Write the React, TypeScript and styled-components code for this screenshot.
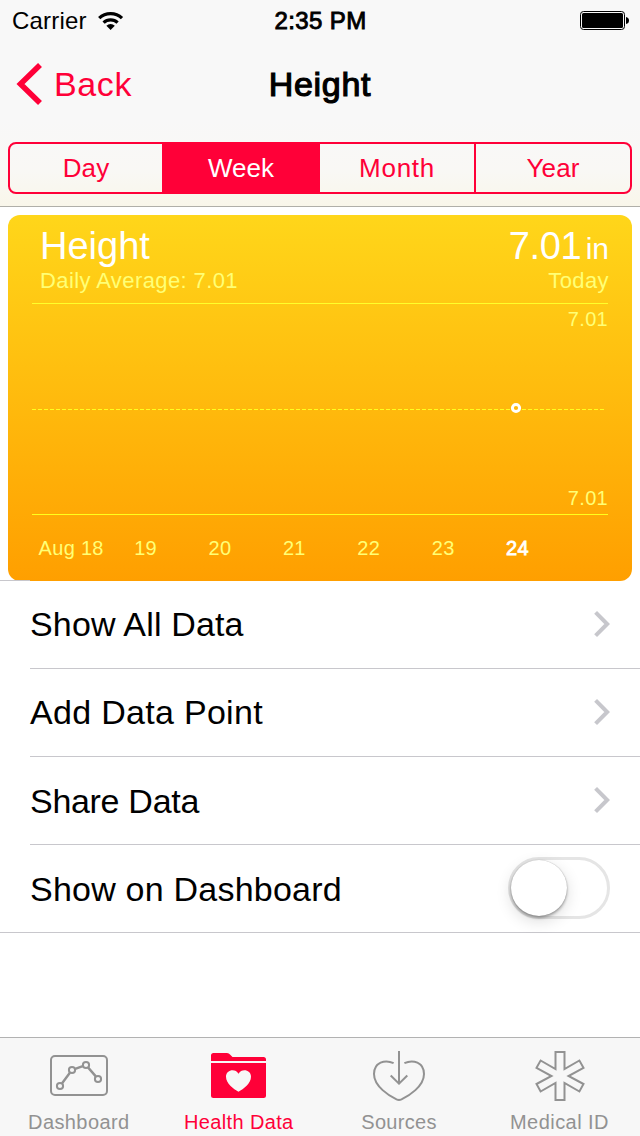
import React from 'react';
import styled, { createGlobalStyle } from 'styled-components';

const red = '#ff0038';
const grey = '#929292';
const hairline = '#c8c7cc';
const paleYellow = '#ffff76';

const GlobalStyle = createGlobalStyle`
  *, *::before, *::after { box-sizing: border-box; }
  body {
    margin: 0;
    background: #fff;
    font-family: 'Liberation Sans', Arial, sans-serif;
    color: #000;
  }
`;

const Screen = styled.div`
  width: 640px;
  height: 1136px;
  display: flex;
  flex-direction: column;
  overflow: hidden;
  background: #fff;
`;

const Label = styled.span<{ $size: number; $spacing?: number; $stroke?: number }>`
  font-size: ${p => p.$size}px;
  letter-spacing: ${p => p.$spacing ?? 0}px;
  -webkit-text-stroke: ${p => p.$stroke ?? 0}px currentColor;
  white-space: nowrap;
`;

const Header = styled.header`
  height: 207px;
  flex: none;
  border-bottom: 1px solid #b0afa9;
  background: linear-gradient(#f8f8f8 0, #f8f8f8 120px, #f9f8f5 170px, #f9f6ea 206px);
`;

const StatusBar = styled.div`
  height: 40px;
  padding: 1px 11px 0 12px;
  display: grid;
  grid-template-columns: 1fr auto 1fr;
  align-items: center;
`;

const Carrier = styled.div`
  display: flex;
  align-items: center;
  gap: 11px;
`;

const BatteryIcon = styled.svg`
  justify-self: end;
`;

const NavBar = styled.div`
  height: 88px;
  padding: 0 16px;
  display: grid;
  grid-template-columns: 1fr auto 1fr;
  align-items: center;
`;

const BackButton = styled.div`
  display: flex;
  align-items: center;
  gap: 10px;
  color: ${red};
`;

const Segments = styled.div`
  margin: 14px 8px 0;
  height: 52px;
  display: grid;
  grid-template-columns: 152px 158px 154px 1fr;
  border: 2px solid ${red};
  border-radius: 8px;
  overflow: hidden;
`;

const Segment = styled.div<{ $active?: boolean; $divided?: boolean }>`
  display: flex;
  align-items: center;
  justify-content: center;
  border-left: ${p => (p.$divided ? `2px solid ${red}` : '0')};
  background: ${p => (p.$active ? red : 'transparent')};
  color: ${p => (p.$active ? '#fff' : red)};
`;

const Card = styled.section`
  flex: none;
  margin: 8px 8px 0;
  height: 366px;
  border-radius: 12px;
  padding: 0 24px;
  background: linear-gradient(#ffd61a, #ff9f00);
  color: ${paleYellow};
`;

const CardHeader = styled.div`
  height: 88px;
  padding: 12px 0 0 8px;
  display: flex;
  justify-content: space-between;
`;

const CardColumn = styled.div<{ $right?: boolean }>`
  display: flex;
  flex-direction: column;
  align-items: ${p => (p.$right ? 'flex-end' : 'flex-start')};
  margin-right: ${p => (p.$right ? '-1px' : '0')};
`;

const CardTitle = styled.div`
  height: 38px;
  line-height: 38px;
  color: #fff;
`;

const CardSubtitle = styled.div`
  height: 32px;
  line-height: 32px;
`;

const Plot = styled.div`
  height: 212px;
  display: flex;
  flex-direction: column;
  justify-content: space-between;
  align-items: flex-end;
  border-top: 1px solid #ffff2b;
  border-bottom: 1px solid #ffff1c;
`;

const AxisValue = styled.div<{ $line: number }>`
  height: ${p => p.$line}px;
  line-height: ${p => p.$line}px;
`;

const PlotLine = styled.svg`
  display: block;
`;

const Dates = styled.div`
  height: 66px;
  margin-left: 2px;
  display: grid;
  grid-template-columns: repeat(7, 74.4px);
  align-items: center;
  justify-items: center;
`;

const DateLabel = styled(Label)<{ $today?: boolean }>`
  color: ${p => (p.$today ? '#fff' : paleYellow)};
`;

const List = styled.div`
  position: relative;
  border-bottom: 1px solid ${hairline};

  &::before {
    content: '';
    position: absolute;
    top: -1px;
    left: 0;
    width: 30px;
    height: 1px;
    background: ${hairline};
  }
`;

const Row = styled.div<{ $drop?: number }>`
  height: 88px;
  margin-left: 30px;
  padding-right: 30px;
  display: flex;
  align-items: center;
  justify-content: space-between;
  border-bottom: 1px solid ${hairline};

  > span {
    padding-top: ${p => p.$drop ?? 0}px;
  }

  > :last-child {
    margin-bottom: 2px;
  }

  &:last-child {
    height: 87px;
    border-bottom: 0;
  }
`;

const Toggle = styled.div`
  width: 102px;
  height: 62px;
  border: 3px solid #e5e5e5;
  border-radius: 31px;
`;

const Knob = styled.div`
  width: 56px;
  height: 56px;
  border-radius: 50%;
  background: #fff;
  box-shadow: 0 5px 16px rgba(0, 0, 0, 0.14), 0 2px 3px rgba(0, 0, 0, 0.32), 0 0 1px rgba(0, 0, 0, 0.3);
`;

const TabBar = styled.nav`
  margin-top: auto;
  height: 99px;
  flex: none;
  border-top: 1px solid #b2b2b2;
  background: #f7f7f7;
  display: grid;
  grid-template-columns: repeat(4, 1fr);
`;

const Tab = styled.div<{ $active?: boolean }>`
  padding-top: 8px;
  display: flex;
  flex-direction: column;
  align-items: center;
  color: ${p => (p.$active ? red : grey)};
`;

const TabText = styled.div<{ $shift: number }>`
  margin-top: 3px;
  height: 26px;
  line-height: 26px;
  transform: translateX(${p => p.$shift}px);
`;

const Disclosure = () => (
  <svg width="18" height="28" viewBox="0 0 18 28" fill="none">
    <path d="M3.6 2.4 15.2 14 3.6 25.6" stroke="#c7c7cc" strokeWidth="4" />
  </svg>
);

const DashboardIcon = () => (
  <svg width="64" height="60" viewBox="0 0 64 60" fill="none" stroke="currentColor" strokeWidth="2">
    <rect x="3" y="10" width="56" height="39" rx="4" />
    <circle cx="12" cy="40" r="3.1" />
    <circle cx="24" cy="24" r="3.1" />
    <circle cx="38" cy="19" r="3.1" />
    <circle cx="50" cy="33" r="3.1" />
    <path d="M14.100 37.200 21.900 26.800M27.200 22.900 34.800 20.100M40.200 21.600 47.800 30.400" strokeWidth="2.4" />
  </svg>
);

const FolderIcon = () => (
  <svg width="64" height="60" viewBox="0 0 64 60" fill="currentColor">
    <path d="M3 15V9.500Q3 7 5.500 7H19q2 0 3 1.500L24.500 11H55.500Q58 11 58 13.500V15Z" />
    <path
      fillRule="evenodd"
      d="M3 17H58V49.500Q58 52 55.500 52H5.500Q3 52 3 49.500ZM30.500 45.700C35.500 43 43 37.500 43 30.700c0-7-9.300-8.700-12.500-3-3.200-5.700-12.500-4-12.500 3 0 6.800 7.500 12.300 12.500 15Z"
    />
  </svg>
);

const SourcesIcon = () => (
  <svg width="64" height="60" viewBox="0 0 64 60" fill="none" stroke="currentColor" strokeWidth="2">
    <path d="M25.600 17.200C17 13 6 16.500 6 28c0 12.500 15.500 22 22.500 25.400q2.500 1.100 5 0C40.500 50 56 40.500 56 28c0-11.500-11-15-19.600-10.800" />
    <path d="M31 5v33M22.700 29.500l8.300 8.200 8.300-8.200" />
  </svg>
);

const MedicalIcon = () => (
  <svg width="64" height="60" viewBox="0 0 64 60" fill="none" stroke="currentColor" strokeWidth="2">
    <path d="M27.500 6h9v17L51.400 14.500 55.500 21.800 40.500 30 55.500 38 51.400 45.500 36.500 37V54h-9V37L12.600 45.500 8.500 38 23.500 30 8.500 21.800 12.600 14.500 27.500 23Z" />
  </svg>
);

const tabs = [
  { name: 'Dashboard', icon: <DashboardIcon />, shift: -1.2, spacing: 0.4 },
  { name: 'Health Data', icon: <FolderIcon />, shift: -1.2, spacing: 0.35 },
  { name: 'Sources', icon: <SourcesIcon />, shift: -1, spacing: 0.3 },
  { name: 'Medical ID', icon: <MedicalIcon />, shift: -0.5, spacing: 0.45 },
];

const days = ['Aug 18', '19', '20', '21', '22', '23', '24'];

export default function App() {
  return (
    <Screen>
      <GlobalStyle />
      <Header>
        <StatusBar>
          <Carrier>
            <Label $size={24} $spacing={0.2}>Carrier</Label>
            <svg width="26" height="20" viewBox="0 0 26 20" fill="none" stroke="#000" strokeWidth="3.2">
              <path d="M1.200 7.200a16.300 16.300 0 0 1 22.800 0" />
              <path d="M5.600 11.700a10 10 0 0 1 14 0" />
              <path d="M12.600 18.900 8.400 14.800a6 6 0 0 1 8.400 0Z" fill="#000" stroke="none" />
            </svg>
          </Carrier>
          <Label $size={24} $spacing={0.4} $stroke={0.9}>2:35 PM</Label>
          <BatteryIcon width="49" height="19" viewBox="0 0 49 19">
            <rect x="0.5" y="0.5" width="44" height="18" rx="3" fill="none" stroke="#000" />
            <rect x="2" y="2" width="41" height="15" rx="1.5" />
            <path d="M46 6q3 .5 3 3.500t-3 3.500Z" />
          </BatteryIcon>
        </StatusBar>
        <NavBar>
          <BackButton>
            <svg width="28" height="44" viewBox="0 0 28 44" fill="none">
              <path d="M24 3 4.500 22 24 41" stroke={red} strokeWidth="5.6" />
            </svg>
            <Label $size={34} $spacing={0.6}>Back</Label>
          </BackButton>
          <Label $size={34} $spacing={0.7} $stroke={1.2}>Height</Label>
        </NavBar>
        <Segments>
          <Segment><Label $size={26} $spacing={0.1}>Day</Label></Segment>
          <Segment $active><Label $size={26}>Week</Label></Segment>
          <Segment><Label $size={26} $spacing={0.7}>Month</Label></Segment>
          <Segment $divided><Label $size={26} $spacing={0.1}>Year</Label></Segment>
        </Segments>
      </Header>

      <Card>
        <CardHeader>
          <CardColumn>
            <CardTitle><Label $size={38}>Height</Label></CardTitle>
            <CardSubtitle><Label $size={22} $spacing={0.4}>Daily Average: 7.01</Label></CardSubtitle>
          </CardColumn>
          <CardColumn $right>
            <CardTitle>
              <Label $size={38} $spacing={-0.4}>7.01</Label> <Label $size={30}>in</Label>
            </CardTitle>
            <CardSubtitle><Label $size={22} $spacing={0.4}>Today</Label></CardSubtitle>
          </CardColumn>
        </CardHeader>
        <Plot>
          <AxisValue $line={30}><Label $size={20} $spacing={0.3}>7.01</Label></AxisValue>
          <PlotLine width="576" height="12" viewBox="0 0 576 12">
            <path d="M0 7.500H478M490 7.500H574" stroke="#ffff1f" strokeDasharray="4 2" />
            <circle cx="484" cy="6" r="3.6" fill="none" stroke="#fff" strokeWidth="3" />
          </PlotLine>
          <AxisValue $line={32}><Label $size={20} $spacing={0.3}>7.01</Label></AxisValue>
        </Plot>
        <Dates>
          {days.map(day => (
            <DateLabel key={day} $size={20} $spacing={0.3} $today={day === '24'} $stroke={day === '24' ? 0.8 : 0}>
              {day}
            </DateLabel>
          ))}
        </Dates>
      </Card>

      <List>
        <Row><Label $size={34} $spacing={0.15}>Show All Data</Label><Disclosure /></Row>
        <Row><Label $size={34} $spacing={0.3}>Add Data Point</Label><Disclosure /></Row>
        <Row $drop={2}><Label $size={34} $spacing={-0.3}>Share Data</Label><Disclosure /></Row>
        <Row $drop={2}><Label $size={34} $spacing={0.22}>Show on Dashboard</Label><Toggle><Knob /></Toggle></Row>
      </List>

      <TabBar>
        {tabs.map(tab => (
          <Tab key={tab.name} $active={tab.name === 'Health Data'}>
            {tab.icon}
            <TabText $shift={tab.shift}><Label $size={20} $spacing={tab.spacing}>{tab.name}</Label></TabText>
          </Tab>
        ))}
      </TabBar>
    </Screen>
  );
}
